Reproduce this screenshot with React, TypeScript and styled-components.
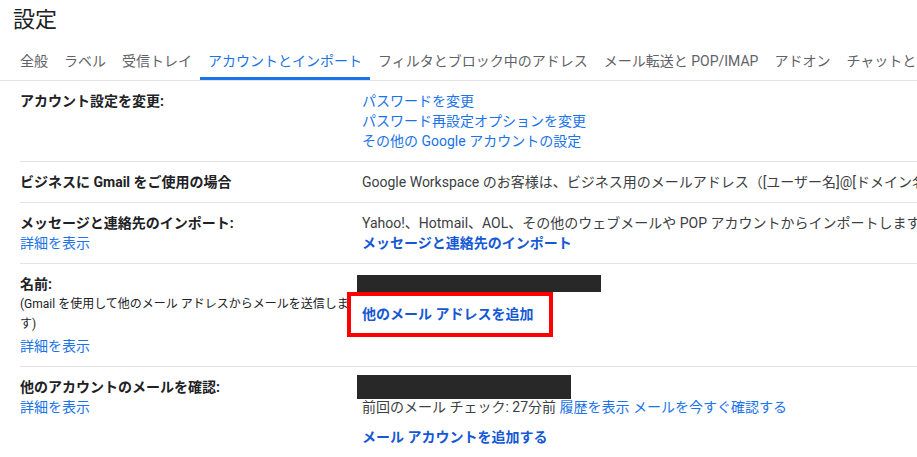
import React from "react";
import styled, { createGlobalStyle } from "styled-components";

const GlobalStyle = createGlobalStyle`
  html, body {
    margin: 0;
    padding: 0;
    background: #ffffff;
    overflow: hidden;
  }
  body {
    font-family: Roboto, "Noto Sans CJK JP", "Noto Sans", sans-serif;
    font-size: 14px;
    color: #202124;
  }
`;

const Page = styled.div`
  width: 100%;
  overflow: hidden;
`;

const Title = styled.h1`
  margin: 0;
  padding: 6px 0 6px 13px;
  font-size: 22px;
  line-height: 28px;
  font-weight: 400;
  color: #202124;
`;

const TabBar = styled.nav`
  display: flex;
  padding-left: 12px;
  border-bottom: 1px solid #e3e3e3;
  white-space: nowrap;
`;

const Tab = styled.div<{ $active?: boolean }>`
  flex-shrink: 0;
  padding: 11px 8px 6px;
  line-height: 20px;
  font-size: 14px;
  color: ${(p) => (p.$active ? "#1a73e8" : "#5f6368")};
  border-bottom: 3px solid ${(p) => (p.$active ? "#1a73e8" : "transparent")};
`;

const Settings = styled.div`
  margin-left: 20px;
`;

const Row = styled.div<{ $last?: boolean }>`
  display: flex;
  padding: 10px 0;
  border-bottom: ${(p) => (p.$last ? "none" : "1px solid #e3e3e3")};
`;

const LabelCell = styled.div`
  width: 342px;
  flex-shrink: 0;
  padding-right: 12px;
  box-sizing: border-box;
`;

const ValueCell = styled.div`
  flex: 1;
  white-space: nowrap;
`;

const Label = styled.div`
  line-height: 20px;
  font-weight: 700;
  color: #202124;
`;

const Note = styled.div`
  font-size: 12px;
  line-height: 20px;
  color: #202124;
`;

const Line = styled.div<{ $gap?: number }>`
  line-height: 20px;
  margin-top: ${(p) => p.$gap ?? 0}px;
  color: #3c4043;
`;

const Link = styled.a<{ $bold?: boolean }>`
  color: ${(p) => (p.$bold ? "#1558d6" : "#1a73e8")};
  font-weight: ${(p) => (p.$bold ? 700 : 400)};
  text-decoration: none;
  cursor: pointer;
`;

const BlockLink = styled(Link)<{ $gap?: number }>`
  display: block;
  line-height: 20px;
  margin-top: ${(p) => p.$gap ?? 0}px;
`;

const RedactedLine = styled.div`
  position: relative;
  height: 20px;
`;

const Redaction = styled.span<{ $w: number; $h: number; $top: number }>`
  position: absolute;
  left: -5px;
  top: ${(p) => p.$top}px;
  width: ${(p) => p.$w}px;
  height: ${(p) => p.$h}px;
  background: #282828;
`;

const Highlighted = styled.div`
  position: relative;
  margin-top: 10px;
  line-height: 20px;
  &::after {
    content: "";
    position: absolute;
    left: -15px;
    top: -12px;
    width: 206px;
    height: 45px;
    box-sizing: border-box;
    border: 4px solid #ff0000;
    pointer-events: none;
  }
`;

const tabs = [
  "全般",
  "ラベル",
  "受信トレイ",
  "アカウントとインポート",
  "フィルタとブロック中のアドレス",
  "メール転送と POP/IMAP",
  "アドオン",
  "チャットと Meet",
];

export default function App() {
  return (
    <Page>
      <GlobalStyle />
      <Title>設定</Title>
      <TabBar>
        {tabs.map((t) => (
          <Tab key={t} $active={t === "アカウントとインポート"}>
            {t}
          </Tab>
        ))}
      </TabBar>
      <Settings>
        <Row>
          <LabelCell>
            <Label>アカウント設定を変更:</Label>
          </LabelCell>
          <ValueCell>
            <BlockLink>パスワードを変更</BlockLink>
            <BlockLink>パスワード再設定オプションを変更</BlockLink>
            <BlockLink>その他の Google アカウントの設定</BlockLink>
          </ValueCell>
        </Row>
        <Row>
          <LabelCell>
            <Label>ビジネスに Gmail をご使用の場合</Label>
          </LabelCell>
          <ValueCell>
            <Line>
              Google Workspace のお客様は、ビジネス用のメールアドレス（[ユーザー名]@[ドメイン名]）、オンライン ストレージの拡張などをご利用いただけます。
            </Line>
          </ValueCell>
        </Row>
        <Row>
          <LabelCell>
            <Label>メッセージと連絡先のインポート:</Label>
            <BlockLink>詳細を表示</BlockLink>
          </LabelCell>
          <ValueCell>
            <Line>
              Yahoo!、Hotmail、AOL、その他のウェブメールや POP アカウントからインポートします。
            </Line>
            <BlockLink $bold>メッセージと連絡先のインポート</BlockLink>
          </ValueCell>
        </Row>
        <Row>
          <LabelCell>
            <Label>名前:</Label>
            <Note>(Gmail を使用して他のメール アドレスからメールを送信します)</Note>
            <BlockLink $gap={2}>詳細を表示</BlockLink>
          </LabelCell>
          <ValueCell>
            <RedactedLine>
              <Redaction $w={244} $h={17} $top={1} />
            </RedactedLine>
            <Highlighted>
              <Link $bold>他のメール アドレスを追加</Link>
            </Highlighted>
          </ValueCell>
        </Row>
        <Row $last>
          <LabelCell>
            <Label>他のアカウントのメールを確認:</Label>
            <BlockLink>詳細を表示</BlockLink>
          </LabelCell>
          <ValueCell>
            <RedactedLine>
              <Redaction $w={214} $h={24} $top={-2} />
            </RedactedLine>
            <Line>
              前回のメール チェック: 27分前 <Link>履歴を表示</Link>{" "}
              <Link>メールを今すぐ確認する</Link>
            </Line>
            <BlockLink $bold $gap={10}>
              メール アカウントを追加する
            </BlockLink>
          </ValueCell>
        </Row>
      </Settings>
    </Page>
  );
}
